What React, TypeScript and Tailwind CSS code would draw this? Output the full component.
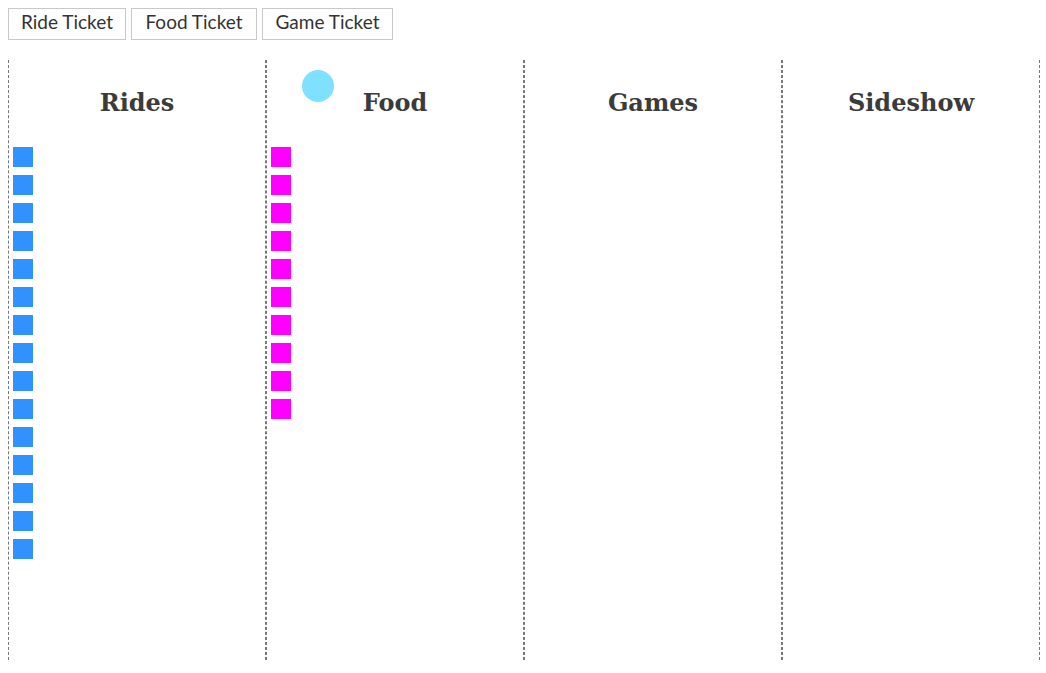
import React from "react";

const cols = [
  { name: "Rides", count: 15, color: "bg-[#3292fd]" },
  { name: "Food", count: 10, color: "bg-[#ff00ff]" },
  { name: "Games", count: 0, color: "bg-[#3292fd]" },
  { name: "Sideshow", count: 0, color: "bg-[#3292fd]" },
];

export default function App() {
  return (
    <div className="relative p-[8px] bg-white min-h-[673px] overflow-hidden">
      <div className="flex gap-[5px] h-[32px]">
        {["Ride Ticket", "Food Ticket", "Game Ticket"].map((t, i) => (
          <button
            key={t}
            className={`h-[32px] pb-[3px] border border-[#c8c8c8] bg-white text-[#333] text-[19px] flex items-center justify-center ${
              i === 0 ? "w-[118px]" : i === 1 ? "w-[126px]" : "w-[131px]"
            }`}
            style={{ fontFamily: "Lato, 'Noto Sans', sans-serif" }}
          >
            {t}
          </button>
        ))}
      </div>
      <div className="flex mt-[20px]">
        {cols.map((c) => (
          <div
            key={c.name}
            className="w-[258px] shrink-0 h-[600px] border-x border-dashed border-[#777] flex flex-col"
          >
            <div
              className="h-[87px] pt-[31px] text-center text-[24px] leading-[24px] font-bold text-[#3b3b3b]"
              style={{ fontFamily: "'DejaVu Serif', 'Liberation Serif', serif" }}
            >
              {c.name}
            </div>
            <div className="flex flex-col gap-[8px] ml-[4px]">
              {Array.from({ length: c.count }).map((_, i) => (
                <div key={i} className={`w-[20px] h-[20px] ${c.color}`} />
              ))}
            </div>
          </div>
        ))}
      </div>
      <div className="absolute left-[302px] top-[70px] w-[32px] h-[32px] rounded-full bg-[#80e0ff]" />
    </div>
  );
}
